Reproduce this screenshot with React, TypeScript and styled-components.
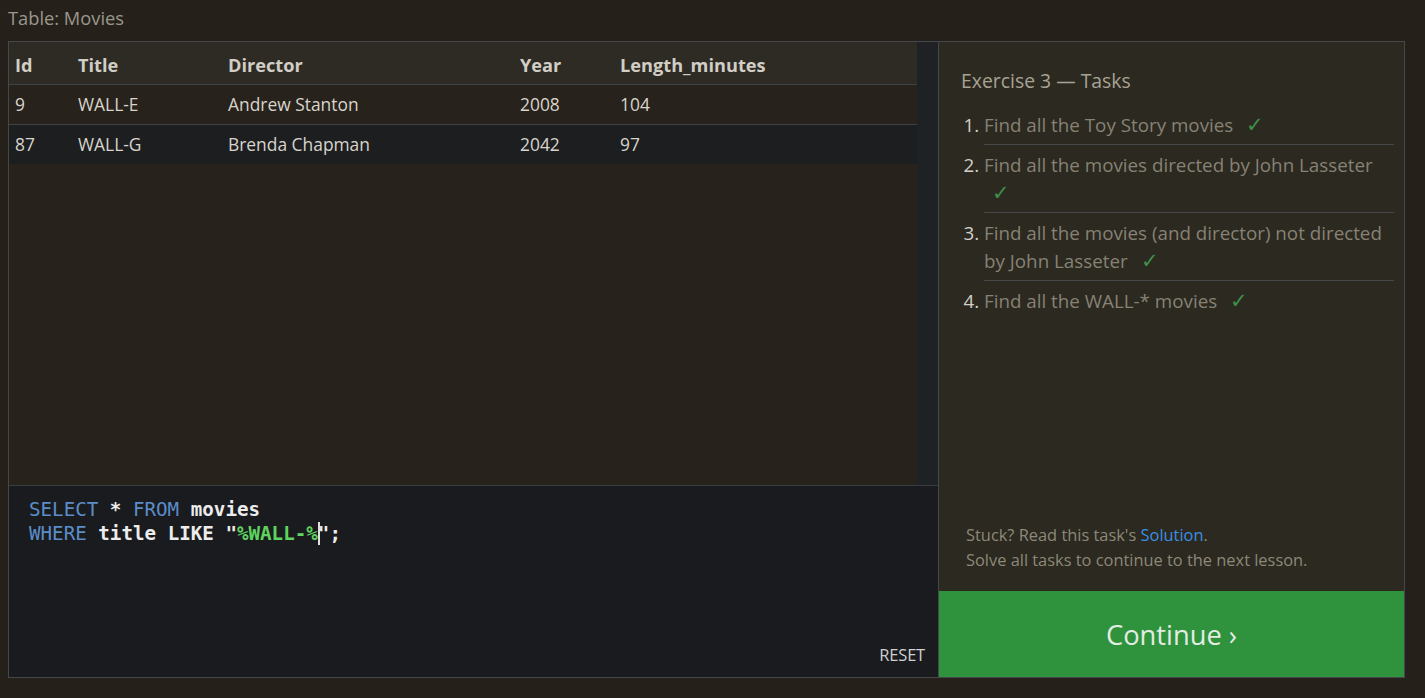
import React from "react";
import styled, { createGlobalStyle } from "styled-components";

const Global = createGlobalStyle`
  html, body { margin: 0; padding: 0; background: #25211a; }
  body { font-family: "Open Sans", "Noto Sans", sans-serif; }
  * { box-sizing: border-box; }
`;

const Page = styled.div`
  width: 1425px;
  height: 698px;
  padding: 6px 20px 0 8px;
  display: flex;
  flex-direction: column;
`;

const Caption = styled.div`
  font-size: 18.3px;
  line-height: 24px;
  color: #9b978d;
  height: 35px;
`;

const Frame = styled.div`
  display: flex;
  border: 1px solid #45484a;
  height: 637px;
  width: 1397px;
`;

const LeftPane = styled.div`
  flex: 0 0 930px;
  display: flex;
  flex-direction: column;
  border-right: 1px solid #45484a;
`;

const TableArea = styled.div`
  flex: 0 0 443px;
  display: flex;
  background: #27221b;
`;

const TableWrap = styled.div`
  flex: 1;
`;

const Scrollbar = styled.div`
  flex: 0 0 21px;
  background: #1f2225;
`;

const Table = styled.table`
  width: 100%;
  border-collapse: collapse;
  table-layout: fixed;
`;

const Th = styled.th<{ $w?: number }>`
  width: ${(p) => (p.$w ? `${p.$w}px` : "auto")};
  text-align: left;
  font-weight: 700;
  font-size: 18.2px;
  color: #d2cec6;
  height: 42px;
  padding: 4px 6px 0 6px;
  background: #2d2b24;
  border-bottom: 1px solid #3f4244;
`;

const Tr = styled.tr<{ $alt?: boolean }>`
  background: ${(p) => (p.$alt ? "#1c1e20" : "#27221b")};
`;

const Td = styled.td<{ $last?: boolean }>`
  font-size: 17.4px;
  color: #d8d4cc;
  height: 40px;
  padding: 0 6px;
  border-bottom: ${(p) => (p.$last ? "none" : "1px solid #3f4244")};
`;

const Editor = styled.div`
  flex: 1;
  background: #1a1b1e;
  border-top: 1px solid #3a3d40;
  padding: 12px 20px 11px 20px;
  display: flex;
  flex-direction: column;
  justify-content: space-between;
`;

const Code = styled.pre`
  margin: 0;
  font-family: "DejaVu Sans Mono", "Liberation Mono", monospace;
  font-size: 19.2px;
  line-height: 24px;
  color: #ececec;
  font-weight: 600;
`;

const Kw = styled.span`
  color: #5b8dc9;
  font-weight: 400;
`;

const Str = styled.span`
  color: #5fd35f;
`;

const Caret = styled.span`
  display: inline-block;
  width: 0;
  border-left: 2px solid #e0e0e0;
  height: 23px;
  vertical-align: -5px;
  margin-right: -2px;
`;

const ResetRow = styled.div`
  display: flex;
  justify-content: flex-end;
  margin-right: -7px;
`;

const Reset = styled.span`
  font-size: 16.5px;
  color: #cfcfcf;
  letter-spacing: -0.2px;
`;

const RightPane = styled.div`
  flex: 1;
  display: flex;
  flex-direction: column;
  background: #2b2920;
`;

const TaskBox = styled.div`
  flex: 1;
  padding: 26px 10px 0 22px;
  display: flex;
  flex-direction: column;
`;

const TaskTitle = styled.div`
  font-size: 19.4px;
  color: #a8a293;
  line-height: 26px;
  margin-bottom: 17px;
`;

const List = styled.ol`
  margin: 0;
  padding: 0 0 0 23px;
  font-size: 18.8px;
  line-height: 28px;
`;

const Item = styled.li<{ $last?: boolean }>`
  color: #878274;
  padding: 0 0 5px 0;
  margin-bottom: 6px;
  border-bottom: ${(p) => (p.$last ? "none" : "1px solid #45484a")};
  &::marker {
    color: #d3d0c8;
  }
`;

const Check = styled.span`
  color: #3f8f4a;
  margin-left: 8px;
  font-size: 21px;
  line-height: 20px;
`;

const Help = styled.div`
  margin-top: auto;
  padding: 0 0 19px 5px;
  font-size: 16.4px;
  line-height: 25px;
  color: #8d8878;
`;

const Link = styled.a`
  color: #3b8fe3;
  text-decoration: none;
`;

const Continue = styled.button`
  flex: 0 0 86px;
  border: none;
  background: #2e933c;
  color: #e3ece3;
  font-family: "Open Sans", "Noto Sans", sans-serif;
  font-size: 27.3px;
  padding: 0;
  margin: 0;
  cursor: pointer;
`;

const rows = [
  ["9", "WALL-E", "Andrew Stanton", "2008", "104"],
  ["87", "WALL-G", "Brenda Chapman", "2042", "97"],
];

const tasks = [
  "Find all the Toy Story movies",
  "Find all the movies directed by John Lasseter",
  "Find all the movies (and director) not directed by John Lasseter",
  "Find all the WALL-* movies",
];

export default function App() {
  return (
    <>
      <Global />
      <Page>
        <Caption>Table: Movies</Caption>
        <Frame>
          <LeftPane>
            <TableArea>
              <TableWrap>
                <Table>
                  <thead>
                    <tr>
                      <Th $w={63}>Id</Th>
                      <Th $w={150}>Title</Th>
                      <Th $w={292}>Director</Th>
                      <Th $w={100}>Year</Th>
                      <Th>Length_minutes</Th>
                    </tr>
                  </thead>
                  <tbody>
                    {rows.map((r, i) => (
                      <Tr key={i} $alt={i % 2 === 1}>
                        {r.map((c, j) => (
                          <Td key={j} $last={i === rows.length - 1}>
                            {c}
                          </Td>
                        ))}
                      </Tr>
                    ))}
                  </tbody>
                </Table>
              </TableWrap>
              <Scrollbar />
            </TableArea>
            <Editor>
              <Code>
                <Kw>SELECT</Kw> * <Kw>FROM</Kw> movies{"\n"}
                <Kw>WHERE</Kw> title LIKE "<Str>%WALL-%</Str>
                <Caret />";
              </Code>
              <ResetRow>
                <Reset>RESET</Reset>
              </ResetRow>
            </Editor>
          </LeftPane>
          <RightPane>
            <TaskBox>
              <TaskTitle>Exercise 3 — Tasks</TaskTitle>
              <List>
                {tasks.map((t, i) => (
                  <Item key={i} $last={i === tasks.length - 1}>
                    {t}{" "}
                    <Check>✓</Check>
                  </Item>
                ))}
              </List>
              <Help>
                Stuck? Read this task's <Link>Solution</Link>.
                <br />
                Solve all tasks to continue to the next lesson.
              </Help>
            </TaskBox>
            <Continue>Continue ›</Continue>
          </RightPane>
        </Frame>
      </Page>
    </>
  );
}
